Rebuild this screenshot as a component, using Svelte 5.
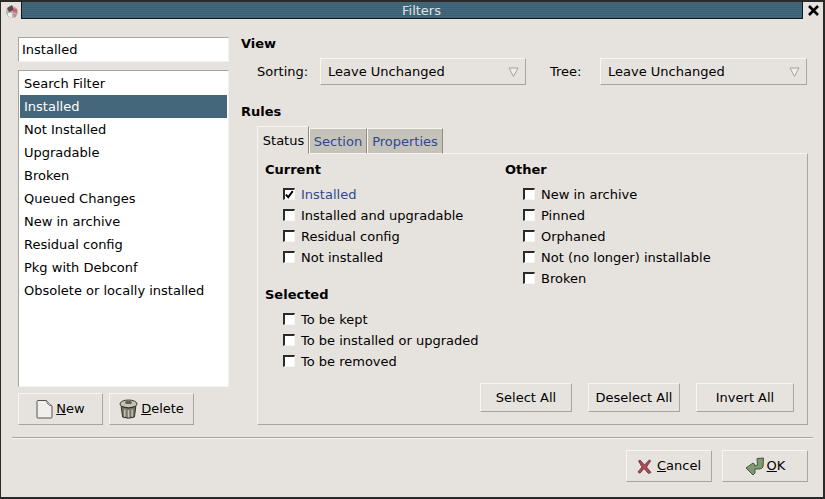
<script>
  const filters = ['Search Filter', 'Installed', 'Not Installed', 'Upgradable', 'Broken', 'Queued Changes', 'New in archive', 'Residual config', 'Pkg with Debconf', 'Obsolete or locally installed'];
  const selectedFilter = 'Installed';
  const current = [
    { label: 'Installed', checked: true },
    { label: 'Installed and upgradable' },
    { label: 'Residual config' },
    { label: 'Not installed' }
  ];
  const chosen = [{ label: 'To be kept' }, { label: 'To be installed or upgraded' }, { label: 'To be removed' }];
  const other = [{ label: 'New in archive' }, { label: 'Pinned' }, { label: 'Orphaned' }, { label: 'Not (no longer) installable' }, { label: 'Broken' }];
</script>

{#snippet checkRow(item)}
  <div class="check-row" class:on={item.checked}>
    <span class="box">
      {#if item.checked}
        <svg width="10" height="10" viewBox="0 0 10 10"><path d="M1 4.5 L3.6 7.4 L8.6 .8" fill="none" stroke="#000" stroke-width="2.2"/></svg>
      {/if}
    </span>
    <span>{item.label}</span>
  </div>
{/snippet}

{#snippet arrow()}
  <svg class="arrow" width="11" height="10" viewBox="0 0 11 10"><path d="M1 1 H10 L5.5 9.5 Z" fill="#f0eeea" stroke="#a5a29b"/></svg>
{/snippet}

<div class="window">
  <div class="titlebar">
    <svg class="app-icon" width="16" height="16" viewBox="0 0 16 16">
      <circle cx="8" cy="9" r="6" fill="#b9b4b4"/>
      <path d="M3 5 L8 2 L10 7 L5 9 Z" fill="#5a4a4a"/>
      <path d="M9 5 L13 6 L13 10 L9 9 Z" fill="#d0607a"/>
      <path d="M4 10 L8 10 L8 15 L4 13 Z" fill="#eee"/>
      <path d="M9 11 L13 11 L11 15 Z" fill="#c88"/>
    </svg>
    <div class="title">Filters</div>
    <svg class="close" width="13" height="13" viewBox="0 0 13 13"><path d="M2 2 L11 11 M11 2 L2 11" stroke="#000" stroke-width="2.6"/></svg>
  </div>

  <div class="body">
    <div class="left">
      <div class="entry">Installed</div>
      <ul class="list">
        {#each filters as name}
          <li class:selected={name === selectedFilter}>{name}</li>
        {/each}
      </ul>
      <div class="left-buttons">
        <div class="btn">
          <svg width="17" height="19" viewBox="0 0 17 19"><path d="M1 1.5 Q1 .5 2 .5 H10.5 L16 6 V17 Q16 18 15 18 H2 Q1 18 1 17 Z" fill="#f1efeb" stroke="#56544f"/><path d="M10.5 .5 Q11 5 16 6" fill="#d5d3cd" stroke="#6e6c66"/></svg>
          <span><u>N</u>ew</span>
        </div>
        <div class="btn">
          <svg width="19" height="20" viewBox="0 0 19 20">
            <ellipse cx="9.5" cy="5" rx="8.5" ry="4" fill="#c6c4b0" stroke="#3a3930"/>
            <ellipse cx="9.5" cy="3.4" rx="3.4" ry="1.6" fill="#5f5e52"/>
            <path d="M2.2 7.5 L3.6 18 Q9.5 20.4 15.4 18 L16.8 7.5 Q9.5 10.5 2.2 7.5 Z" fill="#77766a" stroke="#2f2e28"/>
            <path d="M5.8 10.5 V17.8 M9.5 11 V18.6 M13.2 10.5 V17.8" stroke="#c4c3b4" stroke-width="1.5"/>
          </svg>
          <span><u>D</u>elete</span>
        </div>
      </div>
    </div>

    <div class="right">
      <h4>View</h4>
      <div class="view-row">
        <span class="lbl sorting">Sorting:</span>
        <div class="combo first">Leave Unchanged {@render arrow()}</div>
        <span class="lbl tree">Tree:</span>
        <div class="combo second">Leave Unchanged {@render arrow()}</div>
      </div>

      <h4 class="rules">Rules</h4>
      <div class="tabs">
        <div class="tab active">Status</div>
        <div class="tab section">Section</div>
        <div class="tab props">Properties</div>
      </div>
      <div class="panel">
        <div class="cols">
          <div class="col-a">
            <h4>Current</h4>
            <div class="rows">
              {#each current as item}{@render checkRow(item)}{/each}
            </div>
            <h4 class="selected-head">Selected</h4>
            <div class="rows">
              {#each chosen as item}{@render checkRow(item)}{/each}
            </div>
          </div>
          <div class="col-b">
            <h4>Other</h4>
            <div class="rows">
              {#each other as item}{@render checkRow(item)}{/each}
            </div>
          </div>
        </div>
        <div class="panel-buttons">
          <div class="btn small">Select All</div>
          <div class="btn small">Deselect All</div>
          <div class="btn small invert">Invert All</div>
        </div>
      </div>
    </div>
  </div>

  <div class="separator"></div>

  <div class="actions">
    <div class="btn action cancel">
      <svg width="15" height="15" viewBox="0 0 15 15"><path d="M3 1 L7.5 6 L12.5 .8 L13.6 2 L9.5 8 L14 13.5 L11.5 14.5 L7 9.5 L3 14.2 L1 13 L5 8 L1.5 2 Z" fill="#b04a57" stroke="#5c2f35" stroke-width=".8"/></svg>
      <span><u>C</u>ancel</span>
    </div>
    <div class="btn action ok">
      <svg width="20" height="19" viewBox="0 0 20 19"><path d="M12 1.5 L18.5 1 L18 10 Q17 12 14 12 H10 L10 16 L8 18 L1 11 L8 6 L9.5 7 L10 9 L12.5 8 Z" fill="#7d9a72" stroke="#3c4a36" stroke-width=".9"/></svg>
      <span><u>O</u>K</span>
    </div>
  </div>
</div>

<style>
  :global(body) {
    margin: 0;
    background: #e6e3de;
  }

  .window {
    box-sizing: border-box;
    width: 825px;
    height: 499px;
    display: flex;
    flex-direction: column;
    background: #e6e3de;
    border: 1px solid #2a2a2a;
    border-width: 2px 2px 2px 1px;
    color: #000;
    font-family: "DejaVu Sans", sans-serif;
    font-size: 13px;
    line-height: 16px;
  }

  .titlebar {
    height: 17px;
    display: flex;
    align-items: center;
    flex-shrink: 0;
  }
  .app-icon {
    margin: 0 1px 0 3px;
    flex-shrink: 0;
  }
  .title {
    box-sizing: border-box;
    flex: 1;
    height: 17px;
    padding: 1px 0 0 19px;
    border: 1px solid #10181c;
    border-top: 0;
    text-align: center;
    font-size: 13px;
    line-height: 15px;
    color: #dfe3e3;
    background: repeating-linear-gradient(#44697d 0 1px, #3c6073 1px 2px);
  }
  .close {
    margin: 0 3px 0 4px;
    flex-shrink: 0;
  }

  .body {
    flex: 1;
    display: flex;
    min-height: 0;
    padding: 0 15px 12px 17px;
    gap: 12px;
  }

  .left {
    width: 211px;
    display: flex;
    flex-direction: column;
    padding-top: 18px;
  }
  .entry {
    box-sizing: border-box;
    height: 25px;
    padding: 4px 3px 2px;
    background: #fff;
    border-top: 1px solid #a8a59e;
    border-left: 1px solid #a8a59e;
    border-bottom: 1px solid #f4f2ee;
    border-right: 1px solid #f4f2ee;
  }
  .list {
    flex: 1;
    list-style: none;
    margin: 8px 0 6px;
    padding: 1px;
    background: #fff;
    border: 1px solid #a8a59e;
    border-right-color: #f4f2ee;
    border-bottom-color: #f4f2ee;
  }
  .list li {
    height: 23px;
    line-height: 23px;
    padding-left: 4px;
  }
  .list li.selected {
    background: #44677b;
    color: #fff;
  }
  .left-buttons {
    display: flex;
    gap: 6px;
  }

  .btn {
    box-sizing: border-box;
    height: 32px;
    width: 85px;
    display: flex;
    align-items: center;
    justify-content: center;
    gap: 3px;
    border: 1px solid #f6f5f2;
    border-right-color: #a8a59e;
    border-bottom-color: #a8a59e;
  }

  .right {
    flex: 1;
    min-width: 0;
    display: flex;
    flex-direction: column;
    padding-top: 17px;
  }
  h4 {
    margin: 0;
    font-size: 13px;
    font-weight: bold;
  }
  .view-row {
    display: flex;
    align-items: center;
    margin: 6px 0 0 16px;
  }
  .lbl.sorting {
    width: 63px;
  }
  .lbl.tree {
    width: 50px;
    margin-left: 24px;
  }
  .combo {
    box-sizing: border-box;
    height: 27px;
    width: 206px;
    display: flex;
    align-items: center;
    justify-content: space-between;
    padding: 0 6px 0 7px;
    border: 1px solid #f6f5f2;
    border-right-color: #a8a59e;
    border-bottom-color: #a8a59e;
  }
  .combo.second {
    width: 207px;
  }

  .rules {
    margin-top: 19px;
  }
  .tabs {
    display: flex;
    align-items: flex-end;
    margin: 6px 0 -1px 16px;
    position: relative;
    z-index: 1;
  }
  .tab {
    box-sizing: border-box;
    height: 26px;
    line-height: 25px;
    text-align: center;
    color: #2f4a8c;
    background: #c5c2ba;
    border: 1px solid #f6f5f2;
    border-bottom: 1px solid #f6f5f2;
    border-right-color: #8f8c85;
  }
  .tab.active {
    width: 52px;
    height: 28px;
    padding-left: 1px;
    color: #000;
    background: #e6e3de;
    border-bottom-color: #e6e3de;
    line-height: 27px;
  }
  .tab.section {
    width: 58px;
  }
  .tab.props {
    width: 76px;
  }

  .panel {
    flex: 1;
    min-height: 0;
    margin-left: 16px;
    display: flex;
    flex-direction: column;
    padding: 8px 13px 12px 7px;
    border: 1px solid #f6f5f2;
    border-right-color: #a8a59e;
    border-bottom-color: #a8a59e;
  }
  .cols {
    display: flex;
  }
  .col-a {
    width: 240px;
  }
  .rows {
    margin: 5px 0 0 18px;
    padding-top: 1px;
  }
  .selected-head {
    margin-top: 19px;
  }
  .check-row {
    height: 21px;
    display: flex;
    align-items: center;
    gap: 6px;
  }
  .check-row.on {
    color: #2f4a8c;
  }
  .box {
    box-sizing: border-box;
    width: 12px;
    height: 12px;
    margin-top: -1px;
    display: flex;
    align-items: center;
    justify-content: center;
    background: #fff;
    border: 1px solid #f6f5f2;
    border-top: 2px solid #2a2a28;
    border-left: 2px solid #2a2a28;
  }
  .panel-buttons {
    margin-top: auto;
    display: flex;
    justify-content: flex-end;
    gap: 16px;
  }
  .btn.small {
    width: 92px;
    height: 29px;
  }
  .btn.small.invert {
    width: 98px;
  }

  .separator {
    height: 2px;
    margin: 0 10px 0 11px;
    background: linear-gradient(#a8a59e 50%, #f6f5f2 50%);
    flex-shrink: 0;
  }
  .actions {
    display: flex;
    justify-content: flex-end;
    gap: 10px;
    padding: 11px 15px 15px 0;
    flex-shrink: 0;
  }
  .btn.action {
    width: 86px;
  }
  .btn.cancel {
    gap: 5px;
  }
  .btn.ok {
    gap: 2px;
  }
</style>
